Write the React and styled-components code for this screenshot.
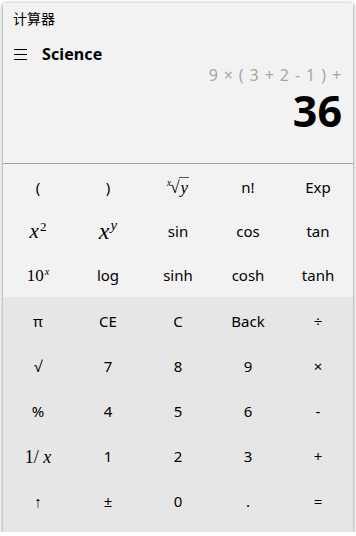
import React from "react";
import styled, { createGlobalStyle } from "styled-components";

const Global = createGlobalStyle`
  html, body {
    margin: 0;
    padding: 0;
    background: #ffffff;
  }
  body {
    font-family: "Noto Sans", "Open Sans", "Noto Sans CJK SC", sans-serif;
    color: #000;
  }
`;

const Window = styled.div`
  margin: 3px 3px 0 3px;
  width: 350px;
  height: 529px;
  display: flex;
  flex-direction: column;
  background: #f2f2f2;
  box-shadow: 0 1px 4px rgba(0, 0, 0, 0.55);
`;

const Header = styled.div`
  height: 160px;
  display: flex;
  flex-direction: column;
  border-bottom: 1px solid #a0a0a0;
`;

const Title = styled.div`
  padding: 5px 0 0 10px;
  height: 31px;
  font-size: 14px;
  line-height: 20px;
  font-family: "Noto Sans CJK SC", "Noto Sans", sans-serif;
`;

const ModeBar = styled.div`
  display: flex;
  align-items: center;
  height: 30px;
  padding-left: 11px;
  gap: 15px;
`;

const Burger = styled.span`
  display: flex;
  flex-direction: column;
  justify-content: space-between;
  width: 13px;
  height: 11px;
  & > i {
    display: block;
    height: 1px;
    background: #000;
  }
`;

const Mode = styled.span`
  font-size: 16px;
  font-weight: 700;
  letter-spacing: 0.1px;
`;

const Display = styled.div`
  display: flex;
  flex-direction: column;
  align-items: flex-end;
  padding-right: 11px;
`;

const Expression = styled.div`
  font-size: 16px;
  line-height: 18px;
  color: #a6a6a6;
  margin-top: -3px;
  letter-spacing: 0.9px;
`;

const Result = styled.div`
  font-size: 43px;
  font-weight: 700;
  line-height: 44px;
  margin-top: 5px;
`;

const Section = styled.div`
  background: ${p => p.$bg};
  padding: ${p => p.$pad};
  display: grid;
  grid-template-columns: repeat(5, 70px);
  grid-auto-rows: ${p => p.$row}px;
  flex: ${p => (p.$grow ? 1 : "none")};
`;

const Key = styled.div`
  display: flex;
  align-items: center;
  justify-content: center;
  font-family: ${p =>
    p.$math ? '"Liberation Serif", "DejaVu Serif", serif' : '"Noto Sans", "Open Sans", sans-serif'};
  font-size: ${p => p.$size || 15}px;
  color: #000;
`;

const Label = styled.span`
  line-height: 1;
  white-space: nowrap;
`;

const Var = styled.i`
  font-style: italic;
`;

const Sup = styled.sup`
  font-size: ${p => p.$scale || 0.62}em;
  vertical-align: ${p => p.$lift || 0.5}em;
  line-height: 0;
  font-style: ${p => (p.$upright ? "normal" : "italic")};
  margin-left: 1px;
`;

const RootIdx = styled.sup`
  font-size: 0.55em;
  vertical-align: 0.7em;
  line-height: 0;
  font-style: italic;
  margin-right: -1px;
`;

const Radicand = styled.span`
  font-style: italic;
  border-top: 1px solid #555;
  padding: 0 1px;
`;

const sci = [
  { k: "(" },
  { k: ")" },
  {
    k: (
      <>
        <RootIdx>x</RootIdx>√<Radicand>y</Radicand>
      </>
    ),
    math: true,
    size: 17,
  },
  { k: "n!" },
  { k: "Exp" },
  {
    k: (
      <>
        <Var>x</Var>
        <Sup $upright>2</Sup>
      </>
    ),
    math: true,
    size: 21,
  },
  {
    k: (
      <>
        <Var>x</Var>
        <Sup $lift={0.6}>y</Sup>
      </>
    ),
    math: true,
    size: 24,
  },
  { k: "sin" },
  { k: "cos" },
  { k: "tan" },
  {
    k: (
      <>
        10<Sup $scale={0.6}>x</Sup>
      </>
    ),
    math: true,
    size: 17,
  },
  { k: "log" },
  { k: "sinh" },
  { k: "cosh" },
  { k: "tanh" },
];

const basic = [
  { k: "π" }, { k: "CE" }, { k: "C" }, { k: "Back" }, { k: "÷" },
  { k: "√" }, { k: "7" }, { k: "8" }, { k: "9" }, { k: "×" },
  { k: "%" }, { k: "4" }, { k: "5" }, { k: "6" }, { k: "-" },
  {
    k: (
      <>
        1/ <Var>x</Var>
      </>
    ),
    math: true,
    size: 18,
  },
  { k: "1" }, { k: "2" }, { k: "3" }, { k: "+" },
  { k: "↑" }, { k: "±" }, { k: "0" }, { k: "." }, { k: "=" },
];

const renderKeys = list =>
  list.map((s, i) => (
    <Key key={i} $math={s.math} $size={s.size}>
      <Label>{s.k}</Label>
    </Key>
  ));

export default function App() {
  return (
    <>
      <Global />
      <Window>
        <Header>
          <Title>计算器</Title>
          <ModeBar>
            <Burger>
              <i />
              <i />
              <i />
            </Burger>
            <Mode>Science</Mode>
          </ModeBar>
          <Display>
            <Expression>9 × ( 3 + 2 - 1 ) +</Expression>
            <Result>36</Result>
          </Display>
        </Header>
        <Section $bg="#f2f2f2" $pad="1px 0 0 0" $row={44}>
          {renderKeys(sci)}
        </Section>
        <Section $bg="#e6e6e6" $pad="2px 0 0 0" $row={45} $grow>
          {renderKeys(basic)}
        </Section>
      </Window>
    </>
  );
}
